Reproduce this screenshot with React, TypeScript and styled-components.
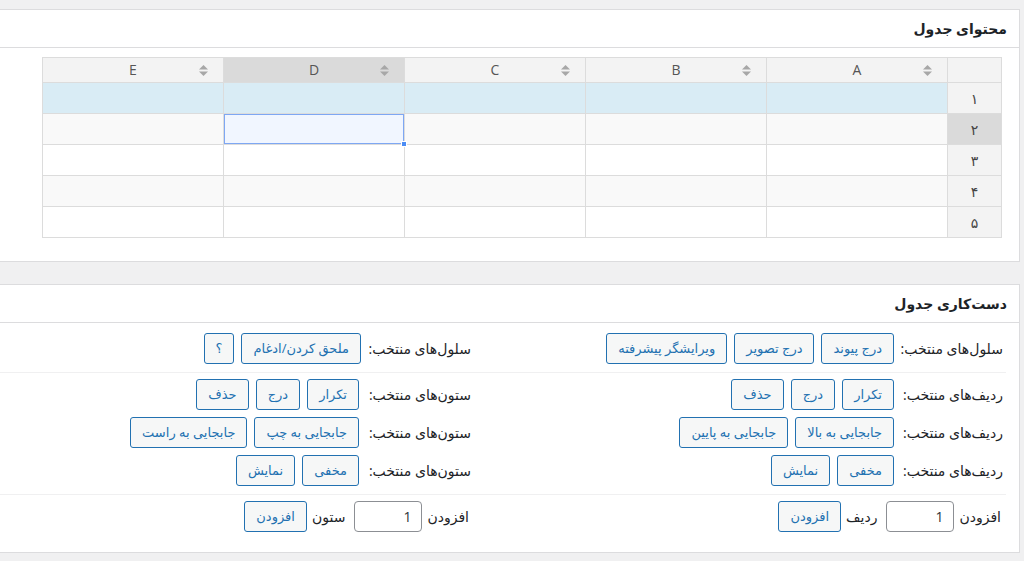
import styled, { createGlobalStyle } from "styled-components";

const GlobalStyle = createGlobalStyle`
  html, body {
    margin: 0;
    padding: 0;
  }
  body {
    background: #f0f0f1;
    font-family: "Open Sans", "DejaVu Sans", sans-serif;
    font-size: 13px;
    color: #1d2327;
    overflow: hidden;
  }
`;

const Page = styled.div`
  direction: rtl;
  padding-top: 9px;
  margin: 0 4px 0 -60px;
`;

const Postbox = styled.section`
  background: #fff;
  border: 1px solid #dcdcde;
  margin-bottom: 22px;
`;

const PostboxTitle = styled.h2`
  margin: 0;
  height: 37px;
  line-height: 37px;
  padding: 0 12px;
  font-size: 14px;
  font-weight: 600;
  color: #1d2327;
  border-bottom: 1px solid #dcdcde;
`;

const ContentBody = styled.div`
  padding: 9px 17px 23px;
`;

const Grid = styled.table`
  border-collapse: collapse;
  table-layout: fixed;
  width: 960px;
`;

const HeadCell = styled.th<{ $active?: boolean }>`
  position: relative;
  height: 24px;
  padding: 0;
  border: 1px solid #dcdcdc;
  background: ${(p) => (p.$active ? "#dadada" : "#f3f3f3")};
  color: #555;
  font-size: 14px;
  font-weight: 400;
  text-align: center;
  vertical-align: middle;
  line-height: 20px;
`;

const SortIcon = styled.svg`
  position: absolute;
  right: 15px;
  top: 7px;
`;

const RowHead = styled.td<{ $active?: boolean }>`
  height: 30px;
  padding: 0;
  border: 1px solid #dcdcdc;
  background: ${(p) => (p.$active ? "#dadada" : "#f3f3f3")};
  color: #444;
  font-size: 14px;
  text-align: center;
`;

const Cell = styled.td<{ $tone: string; $current?: boolean }>`
  position: relative;
  height: 30px;
  padding: 0;
  border: 1px solid #dcdcdc;
  background: ${(p) => (p.$current ? "#f1f6ff" : p.$tone)};
  box-shadow: ${(p) => (p.$current ? "inset 0 0 0 1px #7ea7f3" : "none")};
`;

const Handle = styled.span`
  position: absolute;
  right: -3px;
  bottom: -3px;
  width: 6px;
  height: 6px;
  background: #4b8cf5;
  border: 1px solid #fff;
  box-sizing: border-box;
  z-index: 1;
`;

const ManipBody = styled.div`
  padding: 0 13px 0 1px;
`;

const Section = styled.div<{ $pad: string }>`
  display: grid;
  grid-template-columns: 1fr 1fr;
  row-gap: 7px;
  padding: ${(p) => p.$pad};
  & + & {
    border-top: 1px solid #f0f0f1;
  }
`;

const Half = styled.div`
  display: flex;
  align-items: center;
  gap: 7px;
  padding-right: 3px;
`;

const Label = styled.span<{ $width?: number }>`
  flex-shrink: 0;
  width: ${(p) => (p.$width ? `${p.$width}px` : "auto")};
  font-size: 14px;
  color: #1d2327;
  white-space: nowrap;
`;

const Button = styled.button`
  height: 31px;
  padding: 0 11px;
  font-family: inherit;
  font-size: 13px;
  line-height: 29px;
  color: #2271b1;
  background: #f6f7f7;
  border: 1px solid #2271b1;
  border-radius: 3px;
  white-space: nowrap;
  cursor: pointer;
`;

const CountInput = styled.input`
  width: 68px;
  height: 31px;
  box-sizing: border-box;
  padding: 0 10px;
  font-family: inherit;
  font-size: 14px;
  color: #2c3338;
  background: #fff;
  border: 1px solid #8c8f94;
  border-radius: 4px;
  direction: rtl;
`;

const AddGroup = styled.div`
  display: flex;
  align-items: center;
  gap: 5px;
  margin-right: 2px;
`;

const columns = ["A", "B", "C", "D", "E"];
const toPersian = (n: number) => "۰۱۲۳۴۵۶۷۸۹"[n];

function Sort() {
  return (
    <SortIcon width="9" height="11" viewBox="0 0 9 11">
      <path d="M4.5 0 L9 4.5 H0 Z" fill="#a7a7a7" />
      <path d="M4.5 11 L9 6.5 H0 Z" fill="#a7a7a7" />
    </SortIcon>
  );
}

function ContentTable() {
  const rows = [1, 2, 3, 4, 5];
  return (
    <Grid>
      <colgroup>
        <col style={{ width: 54 }} />
        {columns.map((c) => (
          <col key={c} />
        ))}
      </colgroup>
      <thead>
        <tr>
          <HeadCell />
          {columns.map((c) => (
            <HeadCell key={c} $active={c === "D"}>
              {c}
              <Sort />
            </HeadCell>
          ))}
        </tr>
      </thead>
      <tbody>
        {rows.map((r) => {
          const tone = r === 1 ? "#d9ecf5" : r % 2 === 0 ? "#f9f9f9" : "#ffffff";
          return (
            <tr key={r}>
              <RowHead $active={r === 2}>{toPersian(r)}</RowHead>
              {columns.map((c) => {
                const current = r === 2 && c === "D";
                return (
                  <Cell key={c} $tone={tone} $current={current}>
                    {current && <Handle />}
                  </Cell>
                );
              })}
            </tr>
          );
        })}
      </tbody>
    </Grid>
  );
}

function ButtonRow({ label, width, buttons }: { label: string; width: number; buttons: string[] }) {
  return (
    <Half>
      <Label $width={width}>{label}</Label>
      {buttons.map((b) => (
        <Button key={b}>{b}</Button>
      ))}
    </Half>
  );
}

function AddRow({ unit }: { unit: string }) {
  return (
    <Half>
      <AddGroup>
        <Label>افزودن</Label>
        <CountInput defaultValue="1" />
      </AddGroup>
      <AddGroup>
        <Label>{unit}</Label>
        <Button>افزودن</Button>
      </AddGroup>
    </Half>
  );
}

export default function App() {
  const rowsLabel = "ردیف‌های منتخب:";
  const colsLabel = "ستون‌های منتخب:";
  return (
    <>
      <GlobalStyle />
      <Page>
        <Postbox>
          <PostboxTitle>محتوای جدول</PostboxTitle>
          <ContentBody>
            <ContentTable />
          </ContentBody>
        </Postbox>
        <Postbox>
          <PostboxTitle>دست‌کاری جدول</PostboxTitle>
          <ManipBody>
            <Section $pad="10px 0 8px">
              <ButtonRow
                label="سلول‌های منتخب:"
                width={102}
                buttons={["درج پیوند", "درج تصویر", "ویرایشگر پیشرفته"]}
              />
              <ButtonRow label="سلول‌های منتخب:" width={103} buttons={["ملحق کردن/ادغام", "؟"]} />
            </Section>
            <Section $pad="6px 0 8px">
              <ButtonRow label={rowsLabel} width={102} buttons={["تکرار", "درج", "حذف"]} />
              <ButtonRow label={colsLabel} width={105} buttons={["تکرار", "درج", "حذف"]} />
              <ButtonRow label={rowsLabel} width={102} buttons={["جابجایی به بالا", "جابجایی به پایین"]} />
              <ButtonRow label={colsLabel} width={105} buttons={["جابجایی به چپ", "جابجایی به راست"]} />
              <ButtonRow label={rowsLabel} width={102} buttons={["مخفی", "نمایش"]} />
              <ButtonRow label={colsLabel} width={105} buttons={["مخفی", "نمایش"]} />
            </Section>
            <Section $pad="6px 0 20px">
              <AddRow unit="ردیف" />
              <AddRow unit="ستون" />
            </Section>
          </ManipBody>
        </Postbox>
      </Page>
    </>
  );
}
